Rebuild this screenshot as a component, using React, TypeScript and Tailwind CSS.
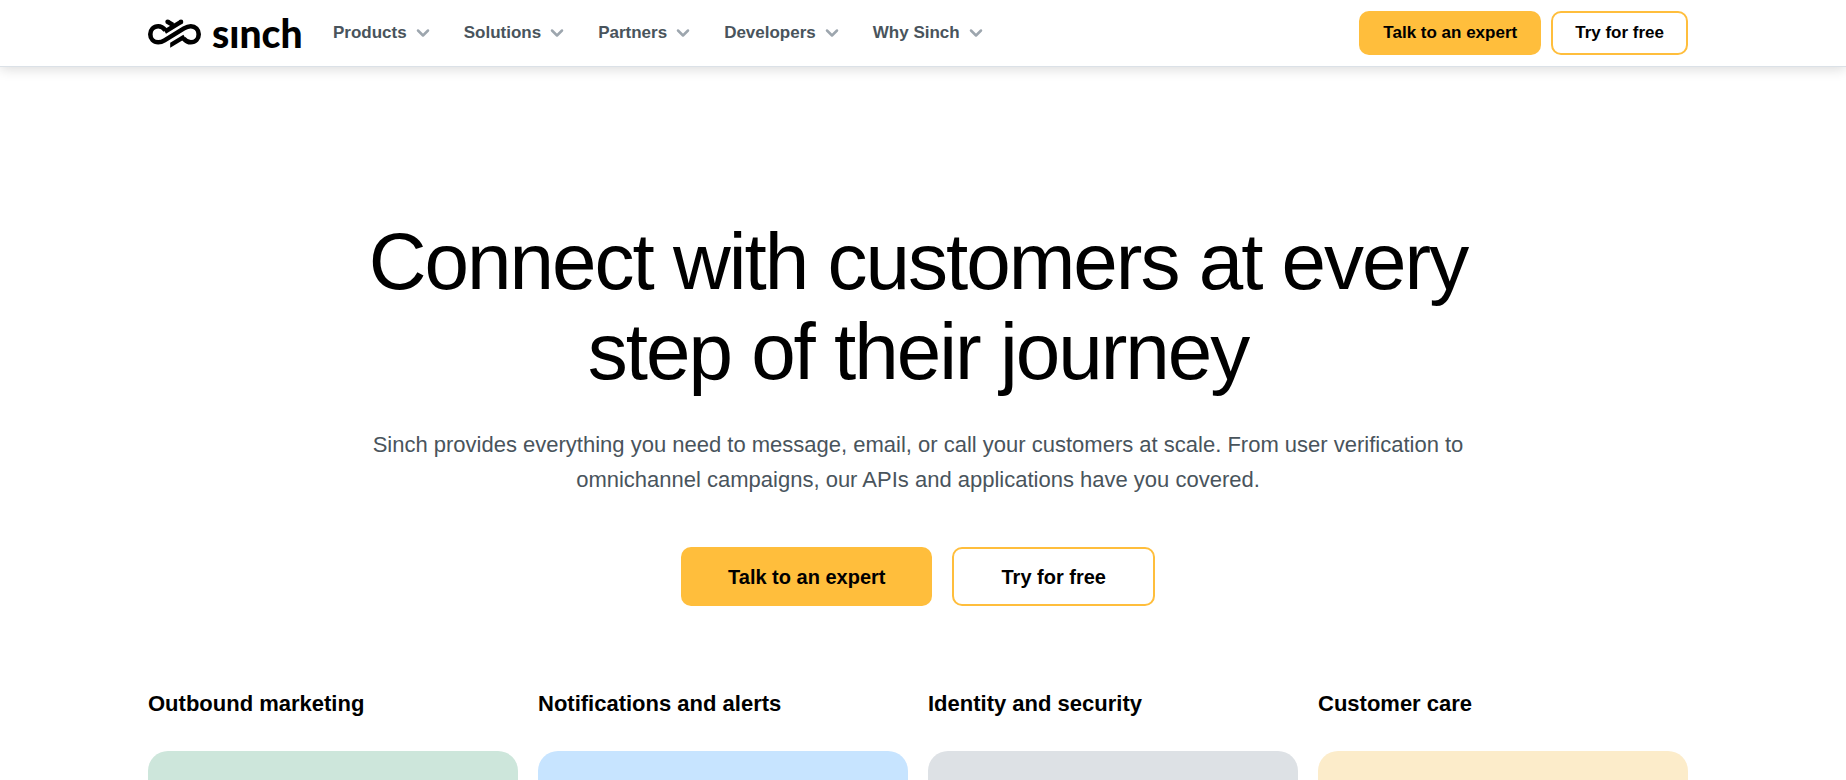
import { ChevronDown } from "lucide-react";

const navItems = ["Products", "Solutions", "Partners", "Developers", "Why Sinch"];

const useCases = [
  { title: "Outbound marketing", card: "bg-[#cde6db]" },
  { title: "Notifications and alerts", card: "bg-[#c7e4ff]" },
  { title: "Identity and security", card: "bg-[#dde1e5]" },
  { title: "Customer care", card: "bg-[#fcecca]" },
];

function Logo() {
  return (
    <a href="#" aria-label="Sinch home" className="flex w-[155px] shrink-0 items-center gap-[11px]">
      <svg width="53" height="34" viewBox="0 0 53 34" fill="none" stroke="#000" className="block shrink-0">
        <g strokeWidth="4.6">
          <path d="M17.4 14.2C15 11.2 12.8 10.2 10.2 10.2C5.6 10.2 2.3 13.7 2.3 18.2C2.3 22.8 5.6 26.3 10.2 26.3C12.6 26.3 14.4 25.7 16.5 24.4L36 12.4C38.3 11 40.4 10.2 42.8 10.2C47.4 10.2 50.7 13.7 50.7 18.2C50.7 22.8 47.4 26.3 42.8 26.3C40 26.3 37.8 25 35.6 22.4" />
          <path d="M16.8 15.8L33 5.9" />
          <path d="M19.6 5.8L25 9" />
        </g>
        <circle cx="19.6" cy="5.8" r="2.3" fill="#000" stroke="none" />
        <circle cx="33" cy="5.9" r="2.3" fill="#000" stroke="none" />
        <path d="M22.2 26.8L35.4 18.8L37.6 22.4L22.2 31.8Z" fill="#000" stroke="none" />
      </svg>
      <span className="font-[Lato,sans-serif] text-[39px] leading-[34px] font-black">sınch</span>
    </a>
  );
}

export default function App() {
  return (
    <div className="min-h-screen overflow-hidden bg-white font-['Liberation_Sans',Arial,sans-serif] text-black">
      {/* Header */}
      <header className="border-b border-[#dbe1e7] pr-[10px] shadow-[0_2px_12px_rgba(0,0,0,0.15)]">
        <div className="mx-auto flex h-[66px] max-w-[1540px] items-center">
          <Logo />
          <nav className="ml-[30px] flex items-center gap-[31px]">
            {navItems.map((item) => (
              <button key={item} className="flex items-center gap-[6px] text-[17px] leading-6 font-bold text-[#49545c]">
                {item}
                <ChevronDown size={20} strokeWidth={3} className="text-[#9da6ae]" />
              </button>
            ))}
          </nav>
          <div className="ml-auto flex gap-[10px] text-[17px] leading-6 font-bold">
            <a href="#" className="flex h-11 items-center rounded-[10px] bg-[#ffbe3c] px-6">
              Talk to an expert
            </a>
            <a href="#" className="flex h-11 items-center rounded-[10px] border-2 border-[#ffbe3c] px-[22px]">
              Try for free
            </a>
          </div>
        </div>
      </header>

      <main className="pr-[10px]">
        {/* Hero */}
        <section className="mx-auto max-w-[1160px] pt-[150px] text-center">
          <h1 className="text-[80px] leading-[90px] tracking-tight">
            Connect with customers at every step of their journey
          </h1>
          <p className="mt-[30px] text-[22px] leading-[35px] text-[#49545c]">
            Sinch provides everything you need to message, email, or call your customers at scale. From user
            verification to omnichannel campaigns, our APIs and applications have you covered.
          </p>
          <div className="mt-[50px] flex justify-center gap-5 text-[20px] leading-6 font-bold">
            <a href="#" className="flex h-[59px] items-center rounded-[10px] bg-[#ffbe3c] px-[47px]">
              Talk to an expert
            </a>
            <a href="#" className="flex h-[59px] items-center rounded-[10px] border-2 border-[#ffbe3c] px-[47px]">
              Try for free
            </a>
          </div>
        </section>

        {/* Use cases */}
        <section className="mx-auto mt-20 grid max-w-[1540px] grid-cols-4 gap-5">
          {useCases.map((useCase) => (
            <div key={useCase.title}>
              <h2 className="text-[22px] leading-[35px] font-bold">{useCase.title}</h2>
              <div className={`mt-[30px] h-[400px] rounded-[20px] ${useCase.card}`} />
            </div>
          ))}
        </section>
      </main>
    </div>
  );
}
